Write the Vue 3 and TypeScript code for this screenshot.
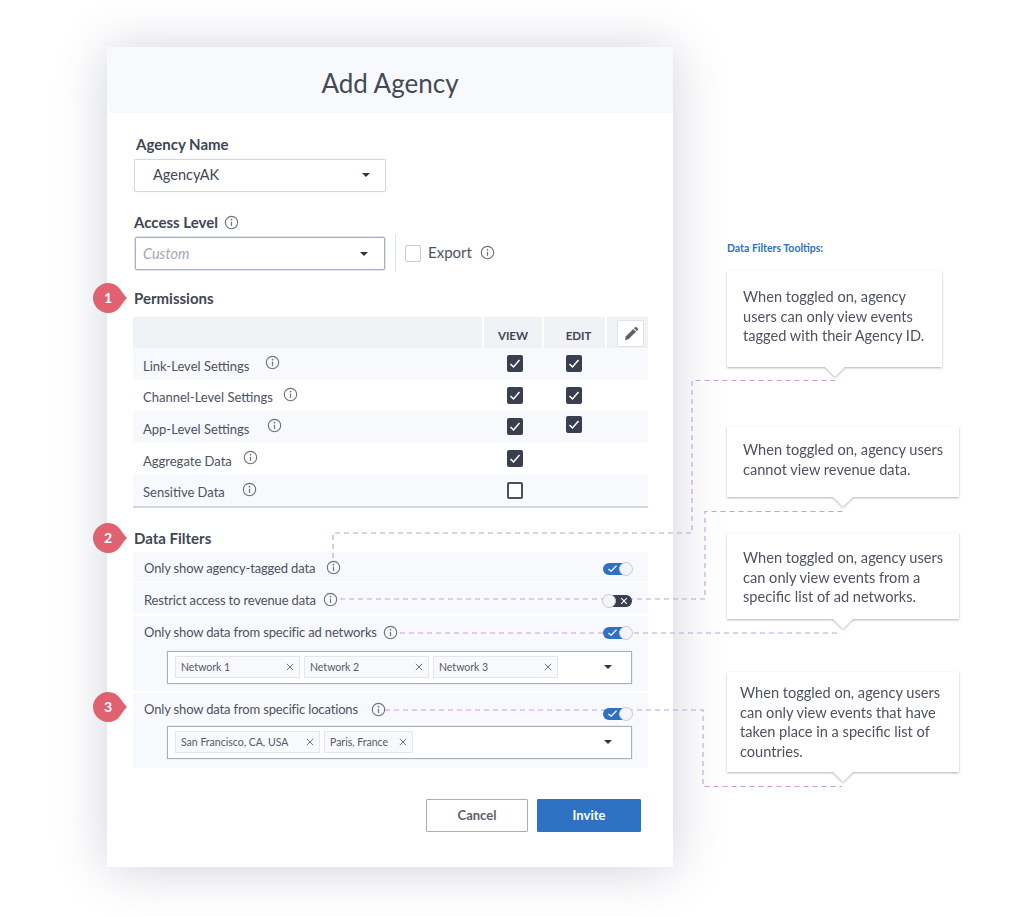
<script setup lang="ts">
interface PermRow { name: string; labelWidth: number; view: boolean; edit: boolean | null; editUp?: boolean }
interface Filter { name: string; labelWidth: number; on: boolean; kind: string; tags: { text: string; width: number }[] }

const perms: PermRow[] = [
  { name: 'Link-Level Settings', labelWidth: 122, view: true, edit: true },
  { name: 'Channel-Level Settings', labelWidth: 140, view: true, edit: true },
  { name: 'App-Level Settings', labelWidth: 124, view: true, edit: true, editUp: true },
  { name: 'Aggregate Data', labelWidth: 100, view: true, edit: null },
  { name: 'Sensitive Data', labelWidth: 99, view: false, edit: null },
]

const filters: Filter[] = [
  { name: 'Only show agency-tagged data', labelWidth: 182, on: true, kind: 'f1', tags: [] },
  { name: 'Restrict access to revenue data', labelWidth: 179, on: false, kind: 'f2', tags: [] },
  {
    name: 'Only show data from specific ad networks', labelWidth: 239, on: true, kind: 'f3',
    tags: [{ text: 'Network 1', width: 125 }, { text: 'Network 2', width: 125 }, { text: 'Network 3', width: 125 }],
  },
  {
    name: 'Only show data from specific locations', labelWidth: 227, on: true, kind: 'f4',
    tags: [{ text: 'San Francisco, CA, USA', width: 145 }, { text: 'Paris, France', width: 89 }],
  },
]

const tips = [
  { text: 'When toggled on, agency users can only view events tagged with their Agency ID.', kind: 't1' },
  { text: 'When toggled on, agency users cannot view revenue data.', kind: 't2' },
  { text: 'When toggled on, agency users can only view events from a specific list of ad networks.', kind: 't3' },
  { text: 'When toggled on, agency users can only view events that have taken place in a specific list of countries.', kind: 't4' },
]

const lines = [
  'M333 558V533H692V380.5H835',
  'M340 599H705V511.5H843',
  'M400 633H840',
  'M385 710H703V786.5H842',
]
</script>

<template>
  <div class="page">
    <svg class="defs" width="0" height="0" aria-hidden="true">
      <symbol id="info" viewBox="0 0 16 16">
        <circle cx="8" cy="8" r="6.6" fill="none" stroke="currentColor" stroke-width="1.2" />
        <circle cx="8" cy="5" r="0.9" fill="currentColor" />
        <path d="M8 7.2V11.6" stroke="currentColor" stroke-width="1.3" fill="none" />
      </symbol>
      <symbol id="badge" viewBox="0 0 34 30">
        <path d="M15 0C20 0 24 2 27 6C29 9 31 12 34 15C31 18 29 21 27 24C24 28 20 30 15 30C7 30 0 23 0 15C0 7 7 0 15 0Z" fill="#e0616f" />
      </symbol>
    </svg>

    <section class="modal">
      <header class="modal-head">Add Agency</header>
      <div class="modal-body">
        <label class="label label-name">Agency Name</label>
        <div class="select select-name">
          <span>AgencyAK</span>
          <i class="caret"></i>
        </div>

        <div class="label label-access">
          <span>Access Level</span>
          <svg class="info"><use href="#info" /></svg>
        </div>
        <div class="access-row">
          <div class="select select-access">
            <span class="placeholder">Custom</span>
            <i class="caret"></i>
          </div>
          <div class="divider"></div>
          <span class="box-light"></span>
          <span class="export">Export</span>
          <svg class="info lift"><use href="#info" /></svg>
        </div>

        <div class="section-title title-perm">
          <div class="badge">
            <svg><use href="#badge" /></svg>
            <span>1</span>
          </div>
          Permissions
        </div>

        <div class="table">
          <div class="thead">
            <div class="th-main"></div>
            <div class="th th-view">VIEW</div>
            <div class="th th-edit">EDIT</div>
            <div class="th-tool">
              <button class="pencil" aria-label="Edit">
                <svg viewBox="0 0 16 16" width="16" height="16">
                  <path d="M2 14l.7-3.4L10.2 3l2.8 2.8-7.6 7.5L2 14z" fill="#5b606e" />
                  <path d="M11 2.2l1-1a1 1 0 0 1 1.400 0l1.400 1.400a1 1 0 0 1 0 1.400l-1 1z" fill="#5b606e" />
                </svg>
              </button>
            </div>
          </div>
          <div v-for="row in perms" :key="row.name" class="tr">
            <div class="td-main">
              <span class="row-label" :style="{ width: row.labelWidth + 'px' }">{{ row.name }}</span>
              <svg class="info up"><use href="#info" /></svg>
            </div>
            <div class="td-view">
              <span class="check" :class="{ off: !row.view }">
                <svg v-if="row.view" viewBox="0 0 16 16"><path d="M3.500 8.500l3 3 6-7" fill="none" stroke="#fff" stroke-width="1.500" /></svg>
              </span>
            </div>
            <div class="td-edit">
              <span v-if="row.edit" class="check" :class="{ up: row.editUp }">
                <svg viewBox="0 0 16 16"><path d="M3.500 8.500l3 3 6-7" fill="none" stroke="#fff" stroke-width="1.500" /></svg>
              </span>
            </div>
          </div>
        </div>

        <div class="section-title title-filter">
          <div class="badge">
            <svg><use href="#badge" /></svg>
            <span>2</span>
          </div>
          Data Filters
        </div>

        <div class="filters">
          <div v-for="(f, i) in filters" :key="f.name" class="filter" :class="f.kind">
            <div v-if="i === 3" class="badge badge-row">
              <svg><use href="#badge" /></svg>
              <span>3</span>
            </div>
            <div class="filter-head">
              <span class="row-label" :style="{ width: f.labelWidth + 'px' }">{{ f.name }}</span>
              <svg class="info"><use href="#info" /></svg>
              <span class="toggle" :class="{ off: !f.on }">
                <svg v-if="f.on" class="mark-on" viewBox="0 0 12 10"><path d="M1.500 5.500l3 2.500 6-6" fill="none" stroke="#fff" stroke-width="1.400" /></svg>
                <svg v-else class="mark-off" viewBox="0 0 10 10"><path d="M1.500 1.500l7 7M8.500 1.500l-7 7" fill="none" stroke="#fff" stroke-width="1.300" /></svg>
                <i class="thumb"></i>
              </span>
            </div>
            <div v-if="f.tags.length" class="multi">
              <span v-for="t in f.tags" :key="t.text" class="tag" :style="{ width: t.width + 'px' }">
                <span>{{ t.text }}</span>
                <svg viewBox="0 0 8 8" width="8" height="8"><path d="M.8.8l6.400 6.400M7.200.8L.8 7.200" stroke="#6f7482" stroke-width="1" fill="none" /></svg>
              </span>
              <i class="caret multi-caret"></i>
            </div>
          </div>
        </div>

        <div class="actions">
          <button class="btn btn-cancel">Cancel</button>
          <button class="btn btn-invite">Invite</button>
        </div>
      </div>
    </section>

    <aside class="notes">
      <div class="notes-title">Data Filters Tooltips:</div>
      <div v-for="t in tips" :key="t.kind" class="tip" :class="t.kind">{{ t.text }}</div>
    </aside>

    <svg class="wires" viewBox="0 0 1024 916" width="1024" height="916" aria-hidden="true">
      <path v-for="d in lines" :key="d" :d="d" fill="none" stroke="#c99bdb" stroke-width="1.100" stroke-dasharray="5 4" />
    </svg>
  </div>
</template>

<style>
html, body { margin: 0; background: #fff; }
</style>

<style scoped>
.page {
  position: relative;
  width: 1024px;
  height: 916px;
  display: flex;
  align-items: flex-start;
  overflow: hidden;
  background: #fff;
  color: #414655;
  font-family: "Lato", "Noto Sans", sans-serif;
}
.defs { position: absolute; }
.wires { position: absolute; left: 0; top: 0; z-index: 1; pointer-events: none; }

.modal {
  flex: none;
  width: 566px;
  height: 820px;
  margin: 47px 0 0 107px;
  background: #fff;
  box-shadow: 0 2px 48px rgba(62, 72, 105, 0.24);
}
.modal-head {
  height: 66px;
  line-height: 72px;
  text-align: center;
  font-size: 26px;
  background: #f8f9fc;
  color: #444958;
}
.modal-body { padding: 0 25px 0 26px; }

.label { font-size: 15px; font-weight: 700; line-height: 20px; color: #414655; }
.label-name { display: block; margin: 21px 0 0 3px; }
.label-access { display: flex; align-items: center; gap: 6px; margin: 20px 0 0 1px; }

.select {
  box-sizing: border-box;
  display: flex;
  align-items: center;
  justify-content: space-between;
  background: #fff;
  border-radius: 2px;
  font-size: 14.500px;
}
.select-name {
  width: 252px;
  height: 33px;
  margin: 5px 0 0 1px;
  padding: 0 15px 2px 18px;
  border: 1px solid #d4d8e2;
  box-shadow: 0 0 1px #d4d8e2;
}
.access-row { display: flex; align-items: center; height: 37px; margin-top: 3px; }
.select-access {
  width: 250px;
  height: 33px;
  margin-left: 2px;
  padding: 0 16px 0 7px;
  border: 1px solid #a8b0c4;
  box-shadow: 0 0 0 .5px #c6cbd8;
}
.placeholder { font-style: italic; color: #a3a8b4; font-size: 14.500px; }
.caret {
  width: 0; height: 0;
  border-left: 4px solid transparent;
  border-right: 4px solid transparent;
  border-top: 4px solid #30343f;
}
.divider { width: 1px; height: 37px; margin: 0 9px 0 10px; background: #dfe1e8; }
.box-light {
  box-sizing: border-box;
  width: 16px; height: 17px;
  border: 1.500px solid #c9ccd5;
  border-radius: 2px;
}
.export { margin: 0 8px 3px 7px; font-size: 15px; color: #4d5261; }

.info { flex: none; width: 15px; height: 15px; color: #6d7280; }
.info.up { transform: translateY(-1px); }
.info.lift { margin-bottom: 3px; }

.section-title {
  position: relative;
  font-size: 15px;
  font-weight: 700;
  line-height: 20px;
  margin-left: 1px;
}
.title-perm { margin-top: 16px; }
.title-filter { margin-top: 20px; }
.badge {
  position: absolute;
  left: -41px;
  top: -5px;
  width: 34px;
  height: 30px;
  z-index: 2;
  display: flex;
  align-items: center;
}
.badge svg { position: absolute; inset: 0; width: 34px; height: 30px; }
.badge span {
  position: relative;
  width: 30px;
  text-align: center;
  color: #fff;
  font-size: 14px;
  font-weight: 700;
}
.badge-row { left: -40px; top: -1px; }

.table { margin-top: 9px; border-bottom: 2px solid #d3d6de; }
.thead { display: flex; height: 31px; background: #f1f2f6; }
.th-main { width: 349px; }
.th {
  box-sizing: border-box;
  border-left: 2px solid #fff;
  font-size: 11.500px;
  font-weight: 700;
  text-align: center;
  line-height: 38px;
}
.th-view { width: 60px; }
.th-edit { width: 63px; padding-left: 8px; }
.th-tool { position: relative; flex: 1; border-left: 2px solid #fff; }
.pencil {
  position: absolute;
  left: 10px;
  top: 3px;
  box-sizing: border-box;
  width: 27px;
  height: 27px;
  padding: 0;
  display: flex;
  align-items: center;
  justify-content: center;
  background: #fff;
  border: 1px solid #dfe1e8;
  border-radius: 1px;
}
.tr { display: flex; height: 31.600px; align-items: center; }
.tr:nth-child(even) { background: #f8f9fc; }
.td-main { display: flex; align-items: center; width: 349px; padding-left: 10px; box-sizing: border-box; }
.row-label { flex: none; font-size: 13px; color: #4d5261; white-space: nowrap; }
.tr .row-label { transform: translateY(1.500px); }
.td-view { width: 65px; padding-left: 25px; box-sizing: border-box; }
.td-edit { width: 60px; padding-left: 19px; box-sizing: border-box; }
.check {
  box-sizing: border-box;
  display: block;
  width: 16px;
  height: 17px;
  background: #3a3f4f;
  border-radius: 2px;
}
.check svg { display: block; width: 16px; height: 17px; }
.check.off { background: #fff; border: 2px solid #4a4f5e; }
.check.up { transform: translateY(-2px); }

.filters { display: flex; flex-direction: column; gap: 2px; margin-top: 4px; }
.filter { position: relative; background: #f8f9fc; padding-left: 11px; box-sizing: border-box; }
.f1 { height: 30px; }
.f2 { height: 31px; margin-top: -1px; }
.f3, .f4 { height: 75px; }
.filter-head { display: flex; align-items: center; height: 33px; }
.f1 .filter-head { height: 32px; }
.f2 .filter-head { height: 34px; }
.filter-head .row-label { letter-spacing: -.15px; }
.toggle {
  position: absolute;
  left: 470px;
  width: 29px;
  height: 12px;
  border-radius: 6px;
  background: #2f71c2;
  z-index: 2;
}
.f1 .toggle { top: 11px; }
.f2 .toggle { top: 12px; }
.f3 .toggle { top: 11px; }
.f4 .toggle { top: 15px; }
.toggle.off { background: #3a3f4f; }
.thumb {
  position: absolute;
  right: -1px;
  top: -1px;
  box-sizing: border-box;
  width: 14px;
  height: 14px;
  border-radius: 50%;
  background: #f4f5f7;
  border: 1px solid #c8cbd3;
}
.toggle.off .thumb { right: auto; left: -1px; }
.mark-on { position: absolute; left: 4px; top: 1.500px; width: 11px; height: 9px; }
.mark-off { position: absolute; right: 4px; top: 2px; width: 8px; height: 8px; }

.multi {
  box-sizing: border-box;
  position: relative;
  display: flex;
  align-items: center;
  gap: 4px;
  width: 465px;
  height: 33px;
  margin: 2px 0 0 23px;
  padding-left: 7px;
  background: #fff;
  border: 1px solid #a8afbf;
  box-shadow: 0 0 1px #b8bdca;
}
.f4 .multi { margin-top: 0; }
.tag {
  box-sizing: border-box;
  display: flex;
  align-items: center;
  justify-content: space-between;
  height: 22px;
  padding: 0 5px;
  background: #f8f9fb;
  border: 1px solid #e4e6ec;
  font-size: 10.500px;
  color: #555a68;
  white-space: nowrap;
}
.multi-caret { position: absolute; right: 19px; top: 13px; }

.actions { display: flex; justify-content: flex-end; gap: 9px; margin: 31px 7px 0 0; }
.btn {
  box-sizing: border-box;
  height: 33px;
  font: 700 13px "Lato", "Noto Sans", sans-serif;
  border-radius: 1px;
}
.btn-cancel { width: 102px; background: #fff; border: 1px solid #a9aeb9; color: #5b606e; }
.btn-invite { width: 104px; background: #2f71c2; border: 1px solid #2f71c2; color: #fff; }

.notes {
  position: relative;
  z-index: 2;
  flex: none;
  margin: 243px 0 0 54px;
  width: 240px;
}
.notes-title { height: 10px; line-height: 10px; font-size: 10.500px; font-weight: 700; color: #2f71c2; }
.tip {
  position: relative;
  box-sizing: border-box;
  width: 232px;
  padding: 14px 12px 0 16px;
  background: #fff;
  font-size: 14.600px;
  line-height: 19.500px;
  color: #4d5261;
  filter: drop-shadow(0 1.500px 1px rgba(60, 65, 85, .4));
}
.tip::after {
  content: "";
  position: absolute;
  bottom: -10px;
  left: 106px;
  border-left: 10px solid transparent;
  border-right: 10px solid transparent;
  border-top: 10px solid #fff;
}
.t1 { width: 215px; height: 96px; margin-top: 18px; padding-top: 16px; }
.t1::after { left: 98px; }
.t2 { height: 71px; margin-top: 59px; }
.t3 { height: 86px; margin-top: 36px; padding-top: 15px; }
.t4 { height: 100px; margin-top: 53px; padding-left: 13px; padding-top: 11px; }
</style>
